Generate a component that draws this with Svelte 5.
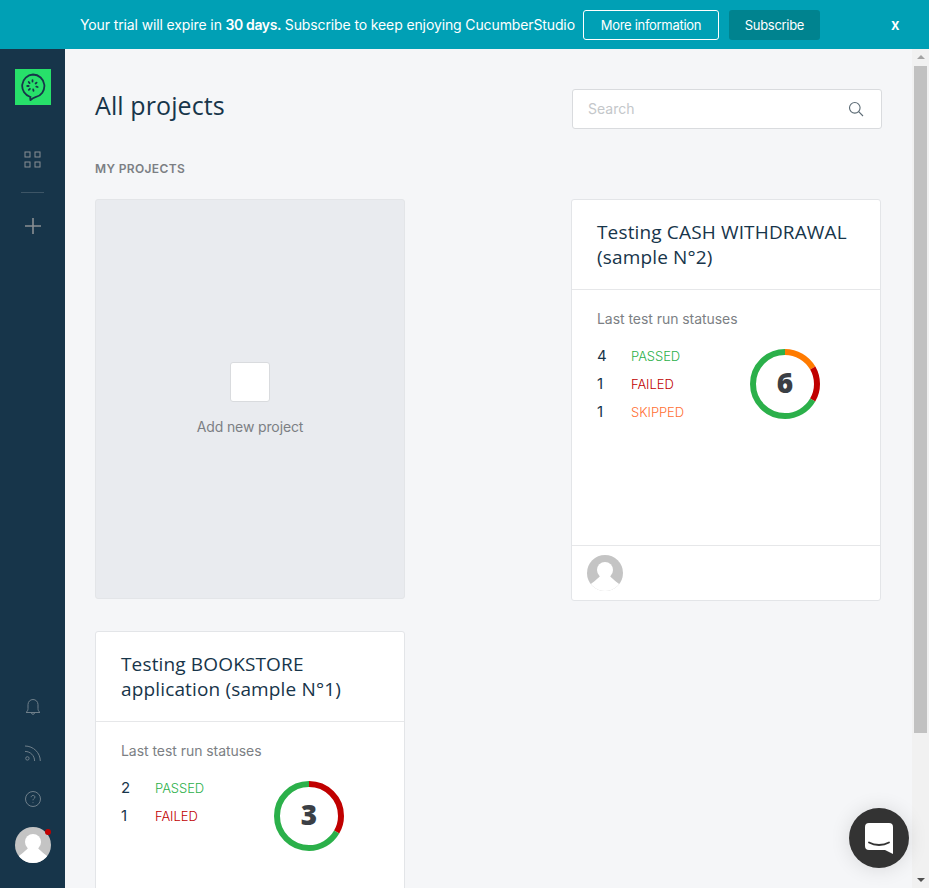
<script>
  const projects = [
    { id: 'add' },
    {
      title: 'Testing CASH WITHDRAWAL (sample N°2)',
      statuses: [
        { count: 4, label: 'PASSED', cls: 'passed' },
        { count: 1, label: 'FAILED', cls: 'failed' },
        { count: 1, label: 'SKIPPED', cls: 'skipped' }
      ],
      segments: [
        { value: 1, color: '#ff7b00' },
        { value: 1, color: '#c00000' },
        { value: 4, color: '#2bb04a' }
      ],
      total: 6
    },
    {
      title: 'Testing BOOKSTORE application (sample N°1)',
      statuses: [
        { count: 2, label: 'PASSED', cls: 'passed' },
        { count: 1, label: 'FAILED', cls: 'failed' }
      ],
      segments: [
        { value: 1, color: '#c00000' },
        { value: 2, color: '#2bb04a' }
      ],
      total: 3
    }
  ];

  const radius = 32;
  const circumference = 2 * Math.PI * radius;

  function arcs(segments, total) {
    let offset = 0;
    return segments.map((s) => {
      const len = (s.value / total) * circumference;
      const arc = { color: s.color, dash: `${len} ${circumference - len}`, offset: -offset };
      offset += len;
      return arc;
    });
  }
</script>

<div class="page">
  <div class="banner">
    <span class="banner-text">Your trial will expire in <b>30 days.</b> Subscribe to keep enjoying CucumberStudio</span>
    <button class="btn-outline">More information</button>
    <button class="btn-solid">Subscribe</button>
    <span class="banner-close">x</span>
  </div>

  <div class="body">
    <nav class="sidebar">
      <div class="logo">
        <svg width="26" height="28" viewBox="0 0 26 28" fill="none" stroke="#17354a" stroke-linecap="round">
          <path d="M13 1.500a11.500 11.500 0 0 1 2.500 22.700c-1.800.4-3.600 1.600-5 3-.3-1-.3-2-.1-3.200A11.500 11.500 0 0 1 13 1.500z" stroke-width="1.800" />
          <path d="M12.500 7.200v1.400M16.600 9.600l-1 .9M17.700 14l-1.400-.4M8.700 9l.9 1.100M7.200 13h1.500M8.800 16.800l1.100-1M13.500 17.800l-.3-1.400" stroke-width="1.800" />
        </svg>
      </div>
      <svg class="nav-icon grid-icon" width="17" height="17" viewBox="0 0 17 17" fill="none" stroke="#8a8f93" stroke-width="1">
        <rect x="1" y="1" width="5" height="5" />
        <rect x="11" y="1" width="5" height="5" />
        <rect x="1" y="11" width="5" height="5" />
        <rect x="11" y="11" width="5" height="5" />
      </svg>
      <div class="nav-divider"></div>
      <svg class="nav-icon" width="18" height="18" viewBox="0 0 18 18" fill="none" stroke="#8a8f93" stroke-width="1.600">
        <path d="M9 1v16M1 9h16" />
      </svg>

      <div class="nav-bottom">
        <svg width="18" height="18" viewBox="0 0 18 18" fill="none" stroke="#6f7f8a" stroke-width="1">
          <path d="M2 14.500c1.400-1 2-2.200 2-4V6.600C4 3.700 6.200 1.500 9 1.500s5 2.200 5 5.100v3.900c0 1.800.6 3 2 4H2z" />
          <path d="M7.400 14.800c0 2 3.200 2 3.200 0" />
        </svg>
        <svg width="18" height="18" viewBox="0 0 18 18" fill="none" stroke="#6f7f8a" stroke-width="1">
          <circle cx="3.400" cy="14.400" r="1.700" />
          <path d="M1 7.400c5.400 0 9.600 4.300 9.600 9.600M1 2c8.400 0 15.300 6.800 15.300 15" />
        </svg>
        <svg width="18" height="18" viewBox="0 0 18 18" fill="none" stroke="#6f7f8a" stroke-width="1">
          <circle cx="9" cy="9" r="7.500" />
          <path d="M7.200 7.200c0-2.400 3.700-2.400 3.700-.1 0 1.500-1.900 1.500-1.900 3.200M9 12.300v.8" />
        </svg>
        <div class="nav-avatar">
          <svg width="36" height="36" viewBox="0 0 36 36">
            <defs>
              <clipPath id="nav-clip"><circle cx="18" cy="18" r="18" /></clipPath>
            </defs>
            <g clip-path="url(#nav-clip)">
              <rect width="36" height="36" fill="#c4c4c4" />
              <circle cx="18" cy="15" r="8" fill="#fff" />
              <path d="M0 36v-3C4 28 10 25 13 21h10c3 4 9 7 13 12v3z" fill="#fff" />
            </g>
          </svg>
          <span class="nav-dot"></span>
        </div>
      </div>
    </nav>

    <main class="main">
      <header class="head">
        <h1>All projects</h1>
        <div class="search">
          <span class="placeholder">Search</span>
          <svg width="16" height="16" viewBox="0 0 16 16" fill="none" stroke="#5c6b75" stroke-width="1.100">
            <circle cx="6.800" cy="6.800" r="5.300" />
            <path d="M10.700 10.700l4.300 4.300" />
          </svg>
        </div>
      </header>

      <div class="section-title">MY PROJECTS</div>

      <div class="grid">
        {#each projects as project}
          {#if project.id === 'add'}
            <div class="add-card">
              <div class="add-box"></div>
              <div class="add-label">Add new project</div>
            </div>
          {:else}
            <article class="card">
              <h2>{project.title}</h2>
              <div class="card-body">
                <div class="card-sub">Last test run statuses</div>
                <div class="stats">
                  <div class="rows">
                    {#each project.statuses as s}
                      <div class="row">
                        <span class="count">{s.count}</span>
                        <span class="status {s.cls}">{s.label}</span>
                      </div>
                    {/each}
                  </div>
                  <div class="donut">
                    <svg width="70" height="70" viewBox="0 0 70 70">
                      <g transform="rotate(-90 35 35)">
                        {#each arcs(project.segments, project.total) as a}
                          <circle cx="35" cy="35" r={radius} fill="none" stroke={a.color} stroke-width="6"
                            stroke-dasharray={a.dash} stroke-dashoffset={a.offset} />
                        {/each}
                      </g>
                    </svg>
                    <span class="donut-total">{project.total}</span>
                  </div>
                </div>
              </div>
              <footer class="card-foot">
                <svg width="36" height="36" viewBox="0 0 36 36">
                  <defs>
                    <clipPath id="foot-clip"><circle cx="18" cy="18" r="18" /></clipPath>
                  </defs>
                  <g clip-path="url(#foot-clip)">
                    <rect width="36" height="36" fill="#c4c4c4" />
                    <circle cx="18" cy="15" r="8" fill="#fff" />
                    <path d="M0 36v-3C4 28 10 25 13 21h10c3 4 9 7 13 12v3z" fill="#fff" />
                  </g>
                </svg>
              </footer>
            </article>
          {/if}
        {/each}
      </div>
    </main>

    <div class="scrollbar">
      <span class="arrow-up"></span>
      <div class="thumb"></div>
      <span class="arrow-down"></span>
    </div>

    <div class="chat">
      <svg width="28" height="31" viewBox="0 0 28 31">
        <path d="M4 0h20a4 4 0 0 1 4 4v27l-8-4H4a4 4 0 0 1-4-4V4a4 4 0 0 1 4-4z" fill="#fff" />
        <path d="M4 19.500c6 3.300 14 3.300 20 0" fill="none" stroke="#333" stroke-width="1.800" stroke-linecap="round" />
      </svg>
    </div>
  </div>
</div>

<style>
  :global(body) {
    margin: 0;
    overflow: hidden;
  }

  .page {
    width: 929px;
    height: 888px;
    display: flex;
    flex-direction: column;
    overflow: hidden;
    font-family: Inter, "Liberation Sans", sans-serif;
    background: #f5f6f8;
  }

  .banner {
    height: 49px;
    flex: none;
    background: #00a0b5;
    color: #fff;
    display: flex;
    align-items: center;
    padding-left: 80px;
    font-size: 14px;
  }

  .banner-text {
    letter-spacing: -0.12px;
  }

  .banner-text b {
    font-weight: 600;
    letter-spacing: -0.4px;
  }

  .btn-outline,
  .btn-solid {
    font-family: inherit;
    font-size: 13px;
    letter-spacing: -0.3px;
    color: #fff;
    height: 30px;
    border-radius: 3px;
    padding: 0;
  }

  .btn-outline {
    width: 136px;
    margin-left: 8px;
    background: transparent;
    border: 1px solid #fff;
  }

  .btn-solid {
    width: 91px;
    margin-left: 10px;
    background: #00838f;
    border: none;
  }

  .banner-close {
    margin-left: 71px;
    font-size: 15px;
    font-weight: 600;
  }

  .body {
    flex: 1;
    display: flex;
    min-height: 0;
    position: relative;
  }

  .sidebar {
    width: 65px;
    flex: none;
    background: #17354a;
    display: flex;
    flex-direction: column;
    align-items: center;
    padding-top: 20px;
    box-sizing: border-box;
  }

  .logo {
    width: 36px;
    height: 36px;
    background: #27e06a;
    display: flex;
    align-items: center;
    justify-content: center;
  }

  .grid-icon {
    margin-top: 46px;
  }

  .nav-divider {
    width: 23px;
    height: 1px;
    background: #3d5566;
    margin: 24px 0;
  }

  .nav-bottom {
    margin-top: auto;
    display: flex;
    flex-direction: column;
    align-items: center;
    gap: 28px;
    padding-bottom: 25px;
  }

  .nav-avatar {
    position: relative;
    width: 36px;
    height: 36px;
    margin-top: -9px;
  }

  .nav-avatar svg {
    display: block;
  }

  .nav-dot {
    position: absolute;
    top: 2px;
    right: 0;
    width: 6px;
    height: 6px;
    border-radius: 50%;
    background: #c00000;
  }

  .main {
    flex: 1;
    min-width: 0;
    padding: 40px 31px 0 30px;
    overflow: hidden;
  }

  .head {
    display: flex;
    justify-content: space-between;
    align-items: flex-start;
    height: 40px;
    margin-right: -1px;
  }

  h1 {
    margin: 0;
    font-family: "Open Sans", Lato, sans-serif;
    font-size: 25px;
    line-height: 32px;
    font-weight: 500;
    letter-spacing: 0.1px;
    color: #17354a;
  }

  .search {
    width: 310px;
    height: 40px;
    box-sizing: border-box;
    background: #fff;
    border: 1px solid #d9dbde;
    border-radius: 3px;
    display: flex;
    align-items: center;
    justify-content: space-between;
    padding: 0 17px 0 15px;
    font-size: 14px;
    color: #c4c7ca;
  }

  .placeholder {
    margin-bottom: 1px;
  }

  .section-title {
    margin-top: 32px;
    font-size: 12px;
    font-weight: 600;
    letter-spacing: 0.35px;
    color: #7c7f84;
    line-height: 15px;
  }

  .grid {
    margin-top: 23px;
    display: grid;
    grid-template-columns: 310px 310px;
    justify-content: space-between;
    grid-auto-rows: 402px;
    row-gap: 30px;
  }

  .add-card {
    height: 400px;
    box-sizing: border-box;
    background: #e9ebef;
    border: 1px solid #e3e5e8;
    border-radius: 3px;
    display: flex;
    flex-direction: column;
    align-items: center;
    padding-top: 162px;
  }

  .add-box {
    width: 40px;
    height: 40px;
    box-sizing: border-box;
    background: #fff;
    border: 1px solid #d9dbde;
    border-radius: 3px;
  }

  .add-label {
    margin-top: 16px;
    font-size: 14px;
    letter-spacing: -0.13px;
    line-height: 17px;
    color: #7c7f84;
  }

  .card {
    height: 402px;
    box-sizing: border-box;
    background: #fff;
    border: 1px solid #e3e5e8;
    border-radius: 3px;
    display: flex;
    flex-direction: column;
  }

  h2 {
    margin: 0;
    height: 90px;
    box-sizing: border-box;
    padding: 20px 25px 0;
    font-family: "Open Sans", Lato, sans-serif;
    font-size: 19px;
    font-weight: 500;
    line-height: 25px;
    letter-spacing: 0.15px;
    color: #17354a;
    border-bottom: 1px solid #e6e7e9;
  }

  .card-body {
    flex: 1;
    padding: 20px 25px 0;
  }

  .card-sub {
    font-size: 14px;
    letter-spacing: -0.05px;
    line-height: 17px;
    color: #7c7f84;
  }

  .stats {
    display: flex;
    justify-content: space-between;
    padding-right: 35px;
    margin-top: 16px;
  }

  .rows {
    display: flex;
    flex-direction: column;
    gap: 11px;
    padding-top: 4px;
  }

  .row {
    display: flex;
    align-items: center;
    height: 17px;
  }

  .count {
    width: 34px;
    font-size: 15px;
    color: #17354a;
  }

  .status {
    font-size: 13px;
    font-weight: 300;
    letter-spacing: -0.05px;
  }

  .passed {
    color: #2bb04a;
  }

  .failed {
    color: #c00000;
  }

  .skipped {
    color: #ff6f33;
  }

  .donut {
    position: relative;
    width: 70px;
    height: 70px;
    margin-top: 6px;
  }

  .donut svg {
    display: block;
  }

  .donut-total {
    position: absolute;
    inset: 0;
    padding-bottom: 4px;
    display: flex;
    align-items: center;
    justify-content: center;
    font-family: "Open Sans", sans-serif;
    font-size: 28px;
    font-weight: 800;
    color: #3b3f45;
  }

  .card-foot {
    height: 55px;
    flex: none;
    box-sizing: border-box;
    border-top: 1px solid #e6e7e9;
    padding: 9px 15px 0;
  }

  .card-foot svg {
    display: block;
  }

  .scrollbar {
    width: 17px;
    flex: none;
    background: #f1f1f1;
    position: relative;
    display: flex;
    flex-direction: column;
    align-items: center;
  }

  .arrow-up {
    margin-top: 6px;
    width: 0;
    height: 0;
    border-left: 4px solid transparent;
    border-right: 4px solid transparent;
    border-bottom: 4px solid #a3a3a3;
  }

  .thumb {
    margin-top: 7px;
    width: 13px;
    height: 667px;
    background: #c1c1c1;
  }

  .arrow-down {
    margin-top: auto;
    margin-bottom: 6px;
    width: 0;
    height: 0;
    border-left: 4px solid transparent;
    border-right: 4px solid transparent;
    border-top: 4px solid #505050;
  }

  .chat {
    position: absolute;
    right: 20px;
    bottom: 20px;
    width: 60px;
    height: 60px;
    border-radius: 50%;
    background: #333;
    display: flex;
    align-items: center;
    justify-content: center;
    box-shadow: 0 1px 20px rgba(0, 0, 0, 0.12);
  }
</style>
